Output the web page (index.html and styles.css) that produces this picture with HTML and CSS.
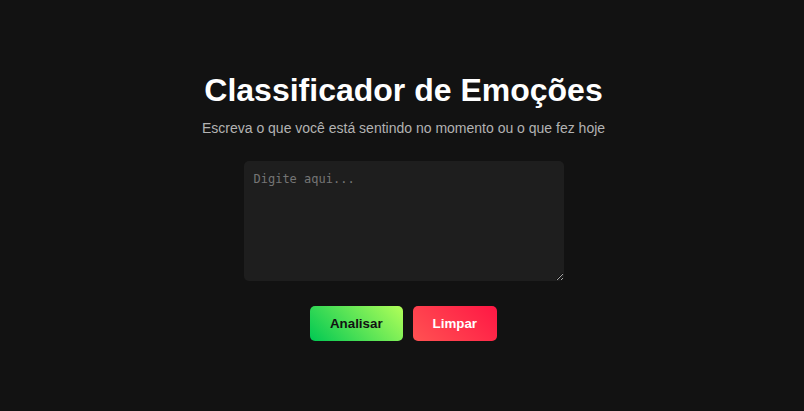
FILE: index.html
```html
<!DOCTYPE html>
<html lang="pt-BR">
<head>
<meta charset="utf-8">
<title>Classificador de Emoções</title>
<link rel="stylesheet" href="styles.css">
</head>
<body>
<main class="container">
  <h1 class="title">Classificador de Emoções</h1>
  <label class="subtitle" for="texto">Escreva o que você está sentindo no momento ou o que fez hoje</label>
  <textarea class="entry" id="texto" placeholder="Digite aqui..."></textarea>
  <div class="actions">
    <button class="btn btn-analyze" type="button">Analisar</button>
    <button class="btn btn-clear" type="button">Limpar</button>
  </div>
</main>
</body>
</html>
```
FILE: styles.css
```css
* {
  box-sizing: border-box;
}

body {
  margin: 0;
  min-height: 100vh;
  padding-left: 3px;
  display: flex;
  justify-content: center;
  align-items: center;
  background: #121212;
  color: #fff;
  font-family: "Liberation Sans", Arial, sans-serif;
}

.container {
  display: flex;
  flex-direction: column;
  align-items: center;
  text-align: center;
}

.title {
  margin: 0 0 10px;
  font-size: 32px;
  line-height: 40px;
}

.subtitle {
  margin-bottom: 25px;
  font-size: 14px;
  line-height: 16px;
  color: #b3b3b3;
}

.entry {
  width: 320px;
  height: 120px;
  margin-bottom: 25px;
  padding: 10px;
  border: 0;
  border-radius: 5px;
  outline: none;
  background: #1e1e1e;
  color: #fff;
  font-family: "DejaVu Sans Mono", monospace;
  font-size: 12px;
  line-height: 16px;
  resize: both;
}

.entry::placeholder {
  color: #757575;
}

.actions {
  display: flex;
  gap: 10px;
}

.btn {
  padding: 10px 20px;
  border: 0;
  border-radius: 5px;
  font-family: inherit;
  font-weight: bold;
  line-height: 15px;
  cursor: pointer;
}

.btn-analyze {
  background: linear-gradient(45deg, #00c853, #b2ff59);
  color: #121212;
}

.btn-clear {
  background: linear-gradient(45deg, #ff5252, #ff1744);
  color: #fff;
}
```
